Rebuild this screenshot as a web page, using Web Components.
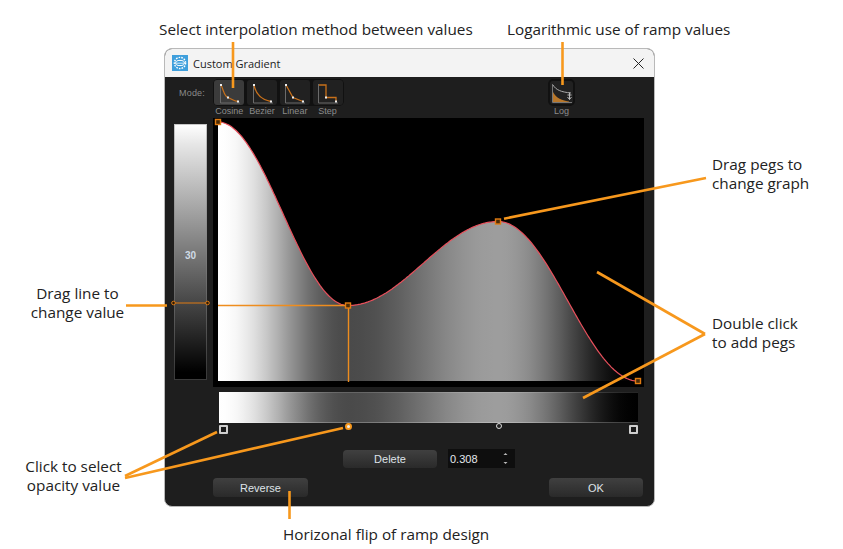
<!DOCTYPE html>
<html>
<head>
<meta charset="utf-8">
<title>Custom Gradient</title>
<style>
  html, body { margin: 0; background: #fff; }
</style>
</head>
<body>
<x-page>
  <x-window>
    <x-toolbar>
      <x-mode label="Cosine" kind="cosine" active first></x-mode>
      <x-mode label="Bezier" kind="bezier"></x-mode>
      <x-mode label="Linear" kind="linear"></x-mode>
      <x-mode label="Step" kind="step" last></x-mode>
      <x-mode slot="log" label="Log" kind="log" first last></x-mode>
    </x-toolbar>
    <x-main>
      <x-slider value="30"></x-slider>
      <x-graph></x-graph>
    </x-main>
    <x-ramp></x-ramp>
    <x-controls>
      <x-button slot="delete" style="width:94px;height:18px">Delete</x-button>
      <x-spin slot="delete" value="0.308"></x-spin>
      <x-button slot="left" style="width:95px;height:19px">Reverse</x-button>
      <x-button slot="right" style="width:94px;height:19px">OK</x-button>
    </x-controls>
  </x-window>
  <x-leaders></x-leaders>
  <x-note x="159" y="20">Select interpolation method between values</x-note>
  <x-note x="507" y="20">Logarithmic use of ramp values</x-note>
  <x-note x="712" y="155">Drag pegs to<br>change graph</x-note>
  <x-note x="712" y="314">Double click<br>to add pegs</x-note>
  <x-note x="20" y="284" w="115" center>Drag line to<br>change value</x-note>
  <x-note x="16" y="457" w="115" center>Click to select<br>opacity value</x-note>
  <x-note x="283" y="525">Horizonal flip of ramp design</x-note>
</x-page>

<script>
const ORANGE = "#f7981d";
const PEG = "#e07b12";
const SANS = `"Liberation Sans", Arial, sans-serif`;

// pegs of the curve, in page pixels
const pegs = [[218, 122], [348, 305.5], [498, 221.5], [638, 381]];
const BASE = 381;
const HEIGHT = 259;

function curve(x) {
  for (let i = 0; i < pegs.length - 1; i++) {
    const [x0, y0] = pegs[i];
    const [x1, y1] = pegs[i + 1];
    if (x <= x1) {
      const t = (1 - Math.cos((Math.PI * (x - x0)) / (x1 - x0))) / 2;
      return y0 + (y1 - y0) * t;
    }
  }
  return BASE;
}

function grey(x) {
  const v = Math.max(0, Math.min(1, (BASE - curve(x)) / HEIGHT));
  const c = Math.round(v * 255);
  return `rgb(${c},${c},${c})`;
}

customElements.define(
  "x-page",
  class extends HTMLElement {
    constructor() {
      super();
      this.attachShadow({ mode: "open" }).innerHTML = `
      <style>
      :host { display: block; position: relative; width: 843px; height: 549px; overflow: hidden;
        background: #fff; padding: 48px 0 0 164px; box-sizing: border-box; }
      </style>
      <slot></slot>
    `;
    }
  }
);

customElements.define(
  "x-window",
  class extends HTMLElement {
    constructor() {
      super();
      this.attachShadow({ mode: "open" }).innerHTML = `
      <style>
      :host { display: flex; flex-direction: column; box-sizing: border-box; width: 491px; height: 459px;
        border: 1px solid #b9b9b9; border-radius: 8px; overflow: hidden; background: #1e1e1e; }
      header { display: flex; align-items: center; flex: none; height: 28px; background: #f3f3f3;
        padding: 0 10px 0 7px; color: #222; font: 11px "Open Sans", sans-serif; box-sizing: border-box; }
      header svg.app { margin-right: 5px; }
      header span { flex: 1; }
      </style>
      <header>
        <svg class="app" width="16" height="16" viewBox="0 0 16 16">
          <rect width="16" height="16" fill="#3f9fdc"/>
          <circle cx="8" cy="8" r="5.6" fill="none" stroke="#fff" stroke-width="1.4" stroke-dasharray="1.6 1.1"/>
          <ellipse cx="8" cy="8" rx="4.4" ry="2.6" fill="none" stroke="#fff" stroke-width="1"/>
          <path d="M3 8.2h10" stroke="#cfe8f7" stroke-width="1"/>
        </svg>
        <span>Custom Gradient</span>
        <svg width="11" height="11" viewBox="0 0 11 11">
          <path d="M.5.5l10 10M10.5.5l-10 10" stroke="#222" stroke-width="1" fill="none"/>
        </svg>
      </header>
      <slot></slot>
    `;
    }
  }
);

customElements.define(
  "x-toolbar",
  class extends HTMLElement {
    constructor() {
      super();
      this.attachShadow({ mode: "open" }).innerHTML = `
      <style>
      :host { display: flex; flex: none; height: 41px; box-sizing: border-box; padding: 2px 0 0 14px; }
      b { width: 34px; height: 27px; font: 9px/29px ${SANS}; color: #8a8a8a; letter-spacing: .2px; }
      .log { display: block; margin-left: 204px; }
      </style>
      <b>Mode:</b><slot></slot><div class="log"><slot name="log"></slot></div>
    `;
    }
  }
);

const modeIcons = {
  cosine: { d: "M4 4C7 10 7 15 11 16.5S16 20 21 20.5", dots: [[4, 4], [11, 16.5], [21, 20.5]] },
  bezier: { d: "M4 4C6 14 12 19 21 20.5", dots: [[4, 4], [21, 20.5]] },
  linear: { d: "M4 4L11 16.5L21 20.5", dots: [[4, 4], [11, 16.5], [21, 20.5]] },
  step: { d: "M4 4H11V16.5H21V20.5", dots: [[11, 16.5], [21, 20.5]] },
};

customElements.define(
  "x-mode",
  class extends HTMLElement {
    constructor() {
      super();
      const kind = this.getAttribute("kind");
      const on = this.hasAttribute("active");
      const log = kind == "log";
      let art;
      if (log) {
        art = `
        <path d="M2.5 3V21.5H22" fill="none" stroke="#777" stroke-width="1"/>
        <path d="M3 11C6 16.5 11 19.5 19 20.5V21H3Z" fill="#b8772a"/>
        <path d="M3 4C6 9 11 11 21 12" fill="none" stroke="#aaa" stroke-width="1"/>
        <path d="M19.5 11.5v7M17.5 14h4M17.5 16l2 2.5l2-2.5" fill="none" stroke="#bbb" stroke-width="1"/>`;
      } else {
        const { d, dots } = modeIcons[kind];
        art = `
        <path d="M3.5 3V22H23" fill="none" stroke="#6b6b6b" stroke-width="1"/>
        <path d="${d}" fill="none" stroke="#c8701a" stroke-width="1.3"/>
        ${dots.map(([x, y]) => `<rect x="${x - 1}" y="${y - 1}" width="2" height="2" fill="#eee"/>`).join("")}`;
      }
      const l = this.hasAttribute("first") ? 5 : 0;
      const e = this.hasAttribute("last") ? 5 : 0;
      this.attachShadow({ mode: "open" }).innerHTML = `
      <style>
      :host { display: flex; flex-direction: column; align-items: center; width: ${log ? 27 : 32.75}px; }
      .box { display: flex; align-items: center; justify-content: center; width: 100%; height: 27px;
        background: #111; border-radius: ${l}px ${e}px ${e}px ${l}px; }
      .in { display: flex; align-items: center; justify-content: center; width: ${log ? 23 : 30}px; height: ${log ? 23 : 25}px;
        border-radius: 3px; background: ${on ? "#3b3b3b" : "#212121"}; }
      svg { display: block; }
      span { font: 9px/11px ${SANS}; color: #8c8c8c; }
      </style>
      <div class="box"><div class="in"><svg width="${log ? 23 : 25}" height="${log ? 23 : 24}" viewBox="0 0 ${log ? "23 23" : "25 24"}">${art}</svg></div></div>
      <span>${this.getAttribute("label")}</span>
    `;
    }
  }
);

customElements.define(
  "x-main",
  class extends HTMLElement {
    constructor() {
      super();
      this.attachShadow({ mode: "open" }).innerHTML = `
      <style>
      :host { display: flex; flex: none; height: 269px; padding-left: 9px; gap: 6px; align-items: flex-start; }
      </style>
      <slot></slot>
    `;
    }
  }
);

customElements.define(
  "x-slider",
  class extends HTMLElement {
    constructor() {
      super();
      this.attachShadow({ mode: "open" }).innerHTML = `
      <style>
      :host { display: flex; align-items: center; justify-content: center; position: relative; flex: none;
        box-sizing: border-box; width: 33px; height: 256px; margin-top: 6px; padding-top: 6px;
        background: linear-gradient(#fff, #e6e6e6 8%, #000 97%); box-shadow: inset 0 0 0 1px rgba(130,130,130,.45);
        font: bold 10px ${SANS}; color: #cfdbe6; }
      svg { position: absolute; left: -4px; top: 173px; }
      </style>
      <span>${this.getAttribute("value")}</span>
      <svg width="41" height="12" viewBox="0 0 41 12">
        <path d="M4 6H37" stroke="${PEG}" stroke-width="1.2"/>
        <circle cx="3.5" cy="6" r="1.8" fill="#2a1a08" stroke="${PEG}"/>
        <circle cx="37.5" cy="6" r="1.8" fill="#2a1a08" stroke="${PEG}"/>
      </svg>
    `;
    }
  }
);

customElements.define(
  "x-graph",
  class extends HTMLElement {
    constructor() {
      super();
      // the svg uses page coordinates, hence the odd viewBox
      let line = "";
      for (let x = 218; x <= 638; x += 1.5) line += `${x},${curve(x).toFixed(1)} `;
      let stops = "";
      for (let x = 218; x <= 638; x += 6)
        stops += `<stop offset="${((x - 218) / 420).toFixed(4)}" stop-color="${grey(x)}"/>`;
      const peg = ([x, y]) =>
        `<rect x="${x - 2.5}" y="${y - 2.5}" width="5" height="5" fill="#4a2c08" stroke="${PEG}" stroke-width="1.4"/>`;
      this.attachShadow({ mode: "open" }).innerHTML = `
      <style>
      :host { display: block; flex: none; width: 431px; height: 269px; background: #000; }
      svg { display: block; }
      </style>
      <svg width="431" height="269" viewBox="213 118 431 269">
        <defs><linearGradient id="g" gradientUnits="userSpaceOnUse" x1="218" x2="638" y1="0" y2="0">${stops}</linearGradient></defs>
        <polygon points="218,${BASE} ${line} 638,${BASE}" fill="url(#g)"/>
        <polyline points="${line}" fill="none" stroke="#e8505c" stroke-width="1.2"/>
        <path d="M218 305.5H348M348.5 305.5V382" stroke="#ee8d1e" stroke-width="1.4" fill="none"/>
        ${pegs.map(peg).join("")}
      </svg>
    `;
    }
  }
);

customElements.define(
  "x-ramp",
  class extends HTMLElement {
    constructor() {
      super();
      let stops = [];
      for (let x = 218; x <= 638; x += 6) stops.push(`${grey(x)} ${(((x - 218) / 420) * 100).toFixed(2)}%`);
      this.attachShadow({ mode: "open" }).innerHTML = `
      <style>
      :host { display: block; position: relative; flex: none; width: 419px; height: 45px; margin: 5px 0 0 54px; }
      .bar { height: 31px; background: linear-gradient(90deg, ${stops.join(",")});
        box-shadow: inset 0 1px 0 rgba(255,255,255,.15), inset 0 -1px 0 rgba(255,255,255,.25); }
      i { position: absolute; box-sizing: border-box; border-radius: 50%; }
      .sq { width: 9px; height: 9px; top: 33px; border-radius: 1px; background: #1a1a1a; border: 2px solid #cfcfcf; }
      .dot { top: 31px; background: #eee; }
      </style>
      <div class="bar"></div>
      <i class="sq" style="left:0"></i>
      <i class="dot" style="left:126px;width:7px;height:7px;border:2px solid ${ORANGE}"></i>
      <i class="dot" style="left:277px;width:6px;height:6px;background:#222;border:1.5px solid #ddd"></i>
      <i class="sq" style="left:410px"></i>
    `;
    }
  }
);

customElements.define(
  "x-controls",
  class extends HTMLElement {
    constructor() {
      super();
      this.attachShadow({ mode: "open" }).innerHTML = `
      <style>
      :host { display: flex; flex-direction: column; flex: none; margin-top: 12px; }
      .mid { display: flex; align-items: center; gap: 11px; height: 19px; padding-left: 178px; }
      .end { display: flex; justify-content: space-between; margin-top: 10px; padding: 0 11px 0 48px; }
      </style>
      <div class="mid"><slot name="delete"></slot></div>
      <div class="end"><slot name="left"></slot><slot name="right"></slot></div>
    `;
    }
  }
);

customElements.define(
  "x-button",
  class extends HTMLElement {
    constructor() {
      super();
      this.attachShadow({ mode: "open" }).innerHTML = `
      <style>
      :host { display: flex; align-items: center; justify-content: center; flex: none; border-radius: 4px;
        background: linear-gradient(#404040, #2a2a2a); color: #dfe3e8; font: 11px ${SANS}; }
      </style>
      <slot></slot>
    `;
    }
  }
);

customElements.define(
  "x-spin",
  class extends HTMLElement {
    constructor() {
      super();
      this.attachShadow({ mode: "open" }).innerHTML = `
      <style>
      :host { display: flex; align-items: center; justify-content: space-between; flex: none; box-sizing: border-box;
        width: 67px; height: 19px; padding: 0 7px 0 2px; background: #0e0e0e; color: #e4e8ec; font: 11px ${SANS}; }
      svg { display: block; }
      </style>
      <span>${this.getAttribute("value")}</span>
      <svg width="5" height="13" viewBox="0 0 5 13">
        <path d="M2.5 1L4.5 3H.5ZM2.5 12L.5 10H4.5Z" fill="#bbb"/>
      </svg>
    `;
    }
  }
);

// callout lines lie over the window, so this one is a free overlay
customElements.define(
  "x-leaders",
  class extends HTMLElement {
    constructor() {
      super();
      const lines = [
        [233, 42, 233, 88],
        [562.5, 42, 562.5, 85],
        [504, 218.7, 706, 178],
        [126, 305.5, 167, 305.5],
        [597, 272, 705, 334],
        [583, 398, 705, 334],
        [217, 432, 125, 476],
        [343, 428, 125, 478],
        [289.5, 491, 289.5, 519],
      ];
      this.attachShadow({ mode: "open" }).innerHTML = `
      <style>
      :host { display: block; position: absolute; left: 0; top: 0; pointer-events: none; }
      svg { display: block; }
      </style>
      <svg width="843" height="549" viewBox="0 0 843 549">
        ${lines.map(([a, b, c, d]) =>
          `<line x1="${a}" y1="${b}" x2="${c}" y2="${d}" stroke="${ORANGE}" stroke-width="2.6"/>`).join("")}
      </svg>
    `;
    }
  }
);

customElements.define(
  "x-note",
  class extends HTMLElement {
    constructor() {
      super();
      const w = this.getAttribute("w");
      this.attachShadow({ mode: "open" }).innerHTML = `
      <style>
      :host { display: block; position: absolute; left: ${this.getAttribute("x")}px; top: ${this.getAttribute("y")}px;
        ${w ? `width: ${w}px;` : "white-space: nowrap;"} text-align: ${this.hasAttribute("center") ? "center" : "left"};
        font: 15.3px/18.5px "Open Sans", sans-serif; color: #222; }
      </style>
      <slot></slot>
    `;
    }
  }
);
</script>
</body>
</html>
